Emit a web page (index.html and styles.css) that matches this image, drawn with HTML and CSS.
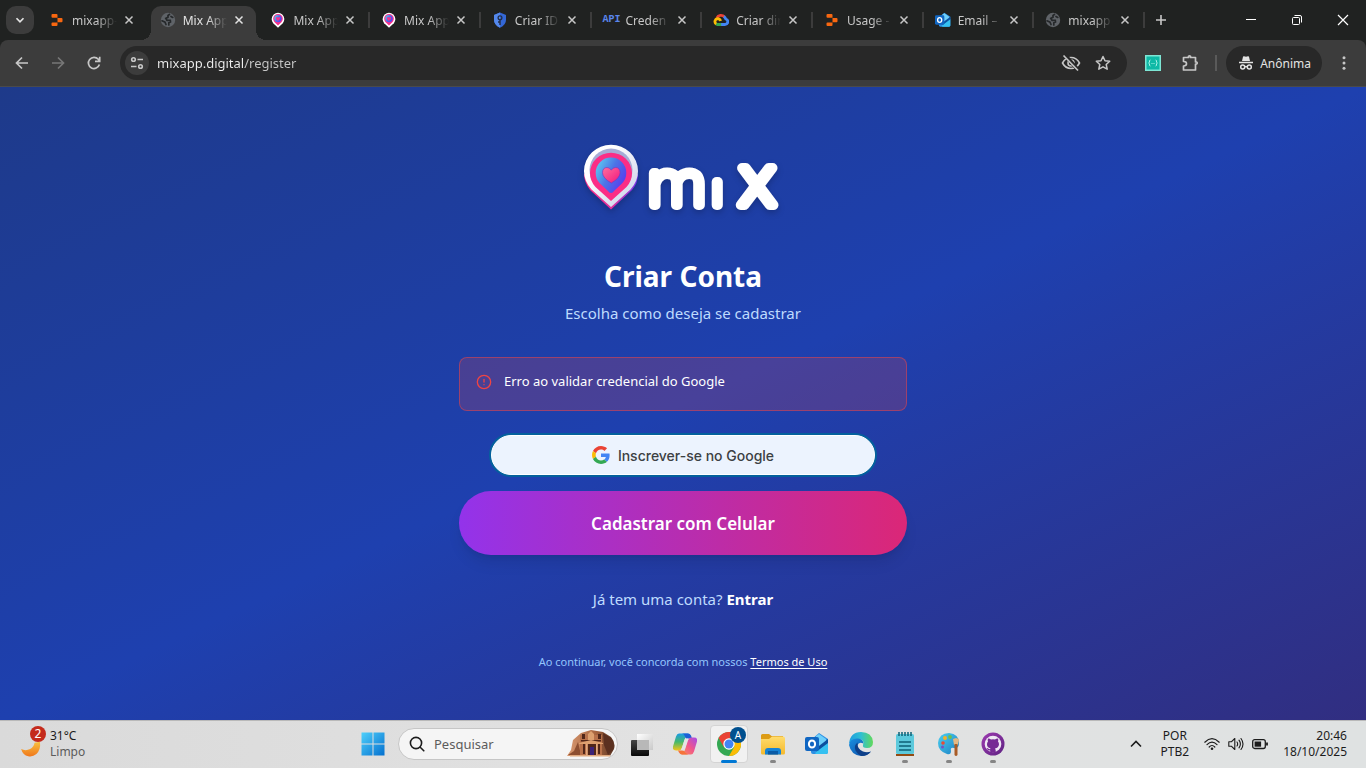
FILE: index.html
```html
<!DOCTYPE html>
<html lang="pt-BR">
<head>
<meta charset="utf-8">
<meta name="viewport" content="width=device-width, initial-scale=1">
<title>Mix App</title>
<link rel="stylesheet" href="styles.css">
</head>
<body>
<svg class="defs" aria-hidden="true">
  <defs>
    <linearGradient id="pinWhite" x1="0" y1="0" x2="1" y2="1"><stop offset=".3" stop-color="#fff"/><stop offset="1" stop-color="#c3cbe6"/></linearGradient>
    <linearGradient id="pinEdge" x1="0" y1="0" x2="1" y2="0"><stop offset="0" stop-color="#ff2d87"/><stop offset=".5" stop-color="#e0309c"/><stop offset="1" stop-color="#7a35f0"/></linearGradient>
    <linearGradient id="pinBlue" x1="0" y1=".1" x2="1" y2=".7"><stop offset="0" stop-color="#5fd0f2"/><stop offset=".5" stop-color="#4b74e6"/><stop offset="1" stop-color="#5a38f0"/></linearGradient>
    <linearGradient id="heart" x1="0" y1="0" x2="1" y2="1"><stop offset="0" stop-color="#ff6f9e"/><stop offset="1" stop-color="#f0167c"/></linearGradient>
    <linearGradient id="win" x1="0" y1="0" x2="1" y2="1"><stop offset="0" stop-color="#4fd0fb"/><stop offset="1" stop-color="#0470cf"/></linearGradient>
    <linearGradient id="moon" x1="0" y1="0" x2="0" y2="1"><stop offset="0" stop-color="#f8c140"/><stop offset="1" stop-color="#f0781c"/></linearGradient>
    <linearGradient id="cop1" x1="0" y1="0" x2="0" y2="1"><stop offset="0" stop-color="#1a9be8"/><stop offset=".5" stop-color="#46b96a"/><stop offset="1" stop-color="#f6c31a"/></linearGradient>
    <linearGradient id="cop2" x1="1" y1="0" x2="0" y2="1"><stop offset="0" stop-color="#a44bea"/><stop offset=".5" stop-color="#f0568c"/><stop offset="1" stop-color="#fb8f55"/></linearGradient>
    <linearGradient id="edgeA" x1="0" y1="0" x2="1" y2="0"><stop offset="0" stop-color="#1c9ce0"/><stop offset=".5" stop-color="#2fbfd2"/><stop offset="1" stop-color="#62d95a"/></linearGradient>
    <linearGradient id="edgeB" x1="0" y1="0" x2="1" y2="1"><stop offset="0" stop-color="#1a8fe0"/><stop offset="1" stop-color="#0c4ba4"/></linearGradient>
    <linearGradient id="folder" x1="0" y1="0" x2="0" y2="1"><stop offset="0" stop-color="#ffdc6e"/><stop offset="1" stop-color="#f5b92c"/></linearGradient>
    <linearGradient id="taskDark" x1="0" y1="0" x2="0" y2="1"><stop offset="0" stop-color="#454545"/><stop offset="1" stop-color="#080808"/></linearGradient>
    <linearGradient id="taskLight" x1="0" y1="0" x2="1" y2="1"><stop offset="0" stop-color="#fff"/><stop offset="1" stop-color="#c9c9c9"/></linearGradient>
    <linearGradient id="pal" x1="0" y1="0" x2="1" y2="1"><stop offset="0" stop-color="#4cd0f0"/><stop offset="1" stop-color="#1b7fc4"/></linearGradient>
    <linearGradient id="gh" x1="0" y1="0" x2="1" y2="1"><stop offset="0" stop-color="#9c3ab0"/><stop offset="1" stop-color="#5f2382"/></linearGradient>
    <linearGradient id="rock" x1="0" y1="0" x2="1" y2="0"><stop offset="0" stop-color="#d99a72"/><stop offset=".6" stop-color="#a8653f"/><stop offset="1" stop-color="#5d3826"/></linearGradient>
    <symbol id="replit" viewBox="0 0 16 16"><path fill="#f86710" d="M3.500 2h4q1 0 1 1v2.700h-5q-1 0-1-1V3q0-1 1-1zM8.500 6h4q1 0 1 1v2.200q0 1-1 1h-4zM3.500 10.400h5v2.700q0 1-1 1h-4q-1 0-1-1v-1.700q0-1 1-1z"/></symbol>
    <symbol id="globe" viewBox="0 0 16 16"><circle cx="8" cy="8" r="7.200" fill="#5f6368"/><path fill="none" stroke="#25282a" stroke-width="1.700" stroke-linecap="round" d="M9.500 2.300 8 3.500v1.700L5.800 6.400 7 8.300h3.300l.2 1.700-1.700.7v2.300M2 8.800l3 1.300 1 2.400M11 4.400l1.800 1"/></symbol>
    <symbol id="pin" viewBox="0 0 56 66"><path fill="#fff" d="M28 65 8 46A26 26 0 1 1 48 46z"/><path fill="#f72f8b" d="M28 56 13 41A20 20 0 1 1 43 41z"/><circle cx="28" cy="27" r="15" fill="url(#pinBlue)"/><path fill="#f72f8b" d="m28 37-8-8q-3-8 4-8l4 3 4-3q7 0 4 8z"/></symbol>
    <symbol id="shield" viewBox="0 0 16 16"><path fill="#3367d6" d="M8 .5 14 3v5q0 5-6 7.700Q2 13 2 8V3z"/><path fill="#5488ec" d="M8 .5 2 3v5q0 5 6 7.700z"/><circle cx="8" cy="5.700" r="1.900" fill="none" stroke="#222d46" stroke-width="1.300"/><path stroke="#222d46" stroke-width="1.400" d="M8 7.500V13M8 10h-2"/></symbol>
    <symbol id="cloud" viewBox="0 0 16 16"><path fill="none" stroke="#ea4335" stroke-width="2.800" d="M3.800 6A4.600 4.600 0 0 1 11.500 5"/><path fill="none" stroke="#4285f4" stroke-width="2.800" d="M10.800 4.500A5 5 0 0 1 12.800 7q2 .8 2 2.800 0 2.500-3 2.700H8"/><path fill="none" stroke="#34a853" stroke-width="2.800" d="M8.200 12.500H4.500L3 11.900"/><path fill="none" stroke="#fbbc04" stroke-width="2.800" d="M3.200 12A3 3 0 0 1 4.500 6.600Q7 6.500 7.500 9"/></symbol>
    <symbol id="outlook" viewBox="0 0 24 24"><path fill="#2c8fe4" d="M6 8 14 1l9 6v13q0 2-2 2H8q-2 0-2-2z"/><path fill="#6fd0fa" d="m11 4 3-2 7 5v8H10z"/><path fill="#0c4f9e" d="M23 7v5l-11 8-2-3z"/><path fill="#35c1f1" d="m23 11-12 9q-2 2 1 2h9q2 0 2-2z"/><rect x="0" y="5" width="14" height="14" rx="2" fill="#1066c2"/><ellipse cx="7" cy="12" rx="3.100" ry="3.600" fill="none" stroke="#fff" stroke-width="2"/></symbol>
    <symbol id="x" viewBox="0 0 16 16"><path stroke="currentColor" stroke-width="1.500" d="m4.500 4.500 7 7m0-7-7 7"/></symbol>
  </defs>
</svg>

<header class="browser">
  <div class="tabstrip">
    <button class="tab-search" aria-label="Pesquisar guias"><svg viewBox="0 0 16 16"><path fill="none" stroke="currentColor" stroke-width="2" d="m4 6 4 4 4-4"/></svg></button>
    <nav class="tabs" aria-label="Guias">
      <div class="tab tab-plain"><svg class="fav"><use href="#replit"/></svg><button class="title">mixapp-</button><button class="close" aria-label="Fechar"><svg><use href="#x"/></svg></button></div>
      <div class="tab tab-active"><svg class="fav"><use href="#globe"/></svg><button class="title">Mix App</button><button class="close" aria-label="Fechar"><svg><use href="#x"/></svg></button></div>
      <div class="tab"><svg class="fav"><use href="#pin"/></svg><button class="title">Mix App</button><button class="close" aria-label="Fechar"><svg><use href="#x"/></svg></button></div>
      <div class="tab"><svg class="fav"><use href="#pin"/></svg><button class="title">Mix App</button><button class="close" aria-label="Fechar"><svg><use href="#x"/></svg></button></div>
      <div class="tab"><svg class="fav"><use href="#shield"/></svg><button class="title">Criar ID</button><button class="close" aria-label="Fechar"><svg><use href="#x"/></svg></button></div>
      <div class="tab"><span class="fav fav-api">API</span><button class="title">Creden</button><button class="close" aria-label="Fechar"><svg><use href="#x"/></svg></button></div>
      <div class="tab"><svg class="fav"><use href="#cloud"/></svg><button class="title">Criar dir</button><button class="close" aria-label="Fechar"><svg><use href="#x"/></svg></button></div>
      <div class="tab"><svg class="fav"><use href="#replit"/></svg><button class="title">Usage -</button><button class="close" aria-label="Fechar"><svg><use href="#x"/></svg></button></div>
      <div class="tab"><svg class="fav"><use href="#outlook"/></svg><button class="title">Email –</button><button class="close" aria-label="Fechar"><svg><use href="#x"/></svg></button></div>
      <div class="tab"><svg class="fav"><use href="#globe"/></svg><button class="title">mixapp</button><button class="close" aria-label="Fechar"><svg><use href="#x"/></svg></button></div>
    </nav>
    <button class="new-tab" aria-label="Nova guia"><svg viewBox="0 0 16 16"><path stroke="currentColor" stroke-width="1.600" d="M8 3v10M3 8h10"/></svg></button>
    <div class="window-controls">
      <button aria-label="Minimizar"><svg viewBox="0 0 12 12"><path stroke="currentColor" d="M1 5.500h10"/></svg></button>
      <button aria-label="Restaurar"><svg viewBox="0 0 12 12"><rect x="1.500" y="3.500" width="7" height="7" rx="1" fill="none" stroke="currentColor"/><path fill="none" stroke="currentColor" d="M3.500 1.500h5.500q1.500 0 1.500 1.500v5.500"/></svg></button>
      <button aria-label="Fechar janela"><svg viewBox="0 0 12 12"><path stroke="currentColor" stroke-width="1.200" d="m1 1 10 10m0-10L1 11"/></svg></button>
    </div>
  </div>
  <div class="toolbar">
    <div class="nav-buttons">
      <button aria-label="Voltar"><svg viewBox="0 0 16 16"><path fill="none" stroke="currentColor" stroke-width="1.700" d="M14 8H3m5-5.500L2.500 8 8 13.500"/></svg></button>
      <button class="disabled" aria-label="Avançar"><svg viewBox="0 0 16 16"><path fill="none" stroke="currentColor" stroke-width="1.700" d="M2 8h11M8 2.500 13.500 8 8 13.500"/></svg></button>
      <button aria-label="Recarregar"><svg viewBox="0 0 16 16"><path fill="none" stroke="currentColor" stroke-width="1.700" d="M13.400 9.500A5.600 5.600 0 1 1 12.300 4.300L13.500 6M13.700 1.800v4.600H9"/></svg></button>
    </div>
    <form class="omnibox">
      <button type="button" class="site-info" aria-label="Informações do site"><svg viewBox="0 0 16 16"><g fill="none" stroke="currentColor" stroke-width="1.600"><circle cx="4.500" cy="4.500" r="1.800"/><path d="M8.500 4.500H14M2 11.500h5.500"/><circle cx="11.500" cy="11.500" r="1.800"/></g></svg></button>
      <input class="url" type="text" aria-label="Endereço" value="mixapp.digital/register">
      <button type="button" aria-label="Cookies bloqueados"><svg class="eye" viewBox="0 0 20 20"><g fill="none" stroke="currentColor" stroke-width="1.600"><path d="M1.500 10Q4.500 4.500 10 4.500T18.500 10Q15.500 15.500 10 15.500T1.500 10z"/><circle cx="10" cy="10" r="3"/></g><path stroke="#282828" stroke-width="4" d="m4 2 13 15"/><path stroke="currentColor" stroke-width="1.700" d="m2.500 2.500 14.500 15"/></svg></button>
      <button type="button" aria-label="Favoritar"><svg viewBox="0 0 16 16"><path fill="none" stroke="currentColor" stroke-width="1.500" stroke-linejoin="round" d="m8 1.500 2 4.300 4.700.5-3.500 3.200 1 4.700L8 11.800l-4.200 2.400 1-4.700L1.300 6.300 6 5.800z"/></svg></button>
    </form>
    <div class="toolbar-actions">
      <button aria-label="Extensão"><svg viewBox="0 0 16 16"><path fill="#7ee6d5" d="M0 0h16v16H0z"/><path fill="#0fb9a6" d="M1.500 1.500h13v13h-13z"/><path fill="none" stroke="#a8f3e8" d="M5.500 5Q4 5 4.500 7L3.700 8l.8 1Q4 11 5.500 11M10.500 5q1.500 0 1 2l.8 1-.8 1q.5 2-1 2M6.500 8.500h1m1 0h1"/></svg></button>
      <button aria-label="Extensões"><svg class="puzzle" viewBox="0 0 18 18"><path fill="none" stroke="currentColor" stroke-width="1.700" stroke-linejoin="round" d="M2.500 3.500h5V2.300q1-1 2 0v1.200h5V8h1.200q1 1 0 2h-1.200v6H2.500v-4q3 0 3-2.300t-3-2.200z"/></svg></button>
      <span class="divider"></span>
      <button class="profile"><svg viewBox="0 0 16 16"><path fill="currentColor" d="M4 6 5 1.800q.2-.8 1-.6l2 .5 2-.5q.8-.2 1 .6L12 6zM1 6.800h14v1.500H1z"/><g fill="none" stroke="currentColor" stroke-width="1.500"><circle cx="4.700" cy="12" r="2"/><circle cx="11.300" cy="12" r="2"/><path d="M6.700 11.800q1.300-.8 2.600 0"/></g></svg>Anônima</button>
      <button aria-label="Menu"><svg viewBox="0 0 16 16"><g fill="currentColor"><circle cx="8" cy="2.800" r="1.500"/><circle cx="8" cy="8" r="1.500"/><circle cx="8" cy="13.200" r="1.500"/></g></svg></button>
    </div>
  </div>
</header>

<main class="page">
  <section class="register">
    <svg class="logo" viewBox="0 0 200 80" role="img" aria-label="Mix">
      <path fill="url(#pinEdge)" d="M28 72.500 7 53Q1 45 1 37h54q0 9-6 16z"/>
      <path fill="url(#pinWhite)" d="M28 70 8.500 52.500A27 26.500 0 1 1 47.500 52.500z"/>
      <path fill="#a5acd6" d="M28 62.500 12.500 48A21.500 21.500 0 1 1 43.500 48z"/>
      <path fill="#fb2d86" d="M28 64 12.500 50A21 20.500 0 1 1 43.500 50z"/>
      <path fill="url(#pinBlue)" d="M28 56q-2 0-3-2l-8-7.500A15.300 15.300 0 1 1 39 46.500L31 54q-1 2-3 2z"/>
      <path fill="url(#heart)" stroke="#7a2fbd" stroke-width=".6" d="M28.300 46Q19.500 41 19.500 35.500q.3-5 4.500-5 2.800 0 4.300 2.700 1.500-2.700 4.300-2.700 4.200 0 4.500 5Q37.100 41 28.300 46z"/>
      <g class="wordmark"><text class="wm-m" x="66" y="68">m</text><text class="wm-i" x="130" y="68">ı</text><text class="wm-x" x="174" y="68" text-anchor="middle">x</text></g>
    </svg>
    <h1>Criar Conta</h1>
    <p class="subtitle">Escolha como deseja se cadastrar</p>
    <div class="alert" role="alert"><svg viewBox="0 0 24 24"><g fill="none" stroke="currentColor" stroke-width="2" stroke-linecap="round"><circle cx="12" cy="12" r="10"/><path d="M12 8v4M12 16h.01"/></g></svg><span>Erro ao validar credencial do Google</span></div>
    <button class="google"><svg viewBox="0 0 48 48"><path fill="#EA4335" d="M24 9.500c3.540 0 6.710 1.220 9.210 3.600l6.850-6.850C35.900 2.380 30.470 0 24 0 14.620 0 6.510 5.380 2.560 13.220l7.980 6.190C12.430 13.720 17.740 9.500 24 9.500z"/><path fill="#4285F4" d="M46.980 24.550c0-1.570-.15-3.090-.38-4.550H24v9.020h12.940c-.58 2.960-2.260 5.480-4.780 7.180l7.730 6c4.510-4.180 7.090-10.360 7.090-17.650z"/><path fill="#FBBC05" d="M10.530 28.590c-.48-1.450-.76-2.990-.76-4.590s.27-3.140.76-4.590l-7.980-6.190C.92 16.460 0 20.120 0 24c0 3.880.92 7.540 2.560 10.780l7.970-6.190z"/><path fill="#34A853" d="M24 48c6.480 0 11.930-2.130 15.890-5.810l-7.730-6c-2.150 1.450-4.920 2.300-8.160 2.300-6.260 0-11.570-4.220-13.470-9.910l-7.980 6.190C6.510 42.620 14.620 48 24 48z"/></svg>Inscrever-se no Google</button>
    <button class="phone">Cadastrar com Celular</button>
    <p class="login">Já tem uma conta? <a href="#entrar">Entrar</a></p>
    <p class="terms">Ao continuar, você concorda com nossos <a href="#termos">Termos de Uso</a></p>
  </section>
</main>

<footer class="taskbar">
  <button class="weather"><span class="weather-icon"><svg viewBox="0 0 24 20"><path fill="url(#moon)" d="M22 2Q23 11 18 15.500 14 19 9 18 3 17 1 10q5 2.500 10 0 4-2 5-7z"/></svg><span class="badge">2</span></span><span class="weather-text"><span>31°C</span><span class="muted">Limpo</span></span></button>
  <div class="dock">
    <button class="app" aria-label="Iniciar"><svg viewBox="0 0 24 24"><path fill="url(#win)" d="M.5.500h11v11H.5zM12.500.500h11v11h-11zM.5 12.500h11v11H.5zM12.500 12.500h11v11h-11z"/></svg></button>
    <label class="search"><svg class="lens" viewBox="0 0 16 16"><g fill="none" stroke="#1c1c1c" stroke-width="1.600" stroke-linecap="round"><circle cx="7" cy="7" r="5.600"/><path d="m11.200 11.200 3.600 3.600"/></g></svg><input type="search" placeholder="Pesquisar" aria-label="Pesquisar"><svg class="petra" viewBox="0 0 48 28"><path fill="url(#rock)" d="M0 26 4 20 6 10 14 3 24 0 36 2 44 7q5 6 3 12l-4 7z"/><path fill="#5b3020" d="m36 3 8 5q4 5 2 12l-5 5-4-10z"/><path fill="#8d4f31" d="m1 25 6-4 4-9 3 13z"/><path fill="#b8714a" d="M13 5h22v21H13z"/><path fill="#512719" d="M14 10h20v1.500H14zM15 4h3v5h-3zM31 4h3v5h-3zM16 13h2v11h-2zM21 14h8v11h-8zM31 13h2v11h-2z"/><path fill="#dda06f" d="m12 13 12-3 12 3v1H12zM21 4l3-3 3 3v6h-6z"/><path fill="#3c2378" d="M23 17h4v8h-4z"/><path fill="#e0a97e" d="M19 14h1.500v11H19zM29 14h1.500v11H29zM3 25h40v1.500H3z"/></svg></label>
    <button class="app" aria-label="Visão de tarefas"><svg viewBox="0 0 24 24"><rect x="2" y="8" width="18" height="16" rx="1" fill="url(#taskDark)"/><path fill="url(#taskLight)" d="M8 2h16v16H8z"/><path fill="#b8b8b8" d="M8 8h12v10H8z"/></svg></button>
    <button class="app" aria-label="Copilot"><svg viewBox="0 0 24 24"><path fill="url(#cop1)" d="M6 1.500h10q-3 1-4 5l-3 9q-1 3-3 3H3q-4 0-3-4l3-10q1-3 3-3z"/><path fill="#1c5fd8" d="M9 1.500h6q2 0 3 2l1 3h-4q-3 0-3-2-1-3-3-3z"/><path fill="url(#cop2)" d="M18 22.500H8q3-1 4-5l3-9q1-3 3-3h3q4 0 3 4l-3 10q-1 3-3 3z"/><path fill="#f5743b" d="M15 22.500H9q-2 0-3-2l-1-2h4q3 0 3 2z"/><path fill="#e5e4e3" d="m11.500 7.500 3.500-1-3 10-3.500 1z"/></svg></button>
    <button class="app app-active" aria-label="Google Chrome"><svg viewBox="0 0 24 24"><circle cx="12" cy="12" r="12" fill="#34a853"/><path fill="#ea4335" d="M1.600 6A12 12 0 0 1 22.400 6H12v6l-5.200 3z"/><path fill="#fbbc05" d="M22.400 6A12 12 0 0 1 12 24l5.200-9-1-9z"/><circle cx="12" cy="12" r="5.700" fill="#fff"/><circle cx="12" cy="12" r="4.500" fill="#4285f4"/></svg><span class="avatar">A</span></button>
    <button class="app app-running" aria-label="Explorador de Arquivos"><svg viewBox="0 0 24 24"><path fill="#dc9b15" d="M1.500 2H8l2.500 2H22v8H0V3.500Q0 2 1.500 2z"/><path fill="url(#folder)" d="M0 7h8l3-2.500h11q2 0 2 2V21q0 1.500-1.500 1.500h-21Q0 22.500 0 21z"/><path fill="#1682d4" d="M4 22.500V19q0-3 3-3h10q3 0 3 3v3.500z"/><path fill="#0a5ba6" d="M7 19h10v3.500H7z"/></svg></button>
    <button class="app" aria-label="Outlook"><svg><use href="#outlook"/></svg></button>
    <button class="app" aria-label="Edge"><svg viewBox="0 0 24 24"><path fill="url(#edgeA)" d="M0 12Q1 0 12 0q11 0 12 10 0 6-6 6-5 0-4-3 2-5-4-6-7 0-10 5z"/><path fill="url(#edgeB)" d="M0 13q1-7 9-6.500 5 .5 5.500 5-5-2-6 2-.5 5 5 7 5 1.500 8.500-1Q18 24 12 24 2 23 0 13z"/><path fill="#0d3f89" d="M8.500 10.500q-4 3-2 8 2 4 6 5.500 6 0 9.500-4.500-4 1.500-8 0-6-2.500-5.500-9z"/></svg></button>
    <button class="app app-running" aria-label="Bloco de Notas"><svg viewBox="0 0 24 24"><rect x="3" y="2" width="18" height="20" rx="1.500" fill="#5cc9dc"/><path fill="#934b13" d="M3 22h18v2H3z"/><path stroke="#0c6075" stroke-width="1.500" d="M6 0v4m3-4v4m3-4v4m3-4v4m3-4v4M6 10h12M6 14h12M6 18h12"/></svg></button>
    <button class="app app-running" aria-label="Paint"><svg viewBox="0 0 24 24"><path fill="url(#pal)" d="M12 1q10 1 10 10 0 6-5 5-4-1-3 3 0 4-4 3Q1 19 1 11 2 1 12 1z"/><circle cx="6" cy="11" r="1.800" fill="#e94b35"/><circle cx="8" cy="6" r="2" fill="#f6b32b"/><circle cx="13" cy="5" r="1.900" fill="#6fc04b"/><circle cx="5.500" cy="15" r="1.500" fill="#7551c4"/><path fill="#e4b883" d="m16 7 3-1 3 1-1 6h-4z"/><path fill="#a85b26" d="M17.500 12h3v11q-1.500 2-3 0z"/></svg></button>
    <button class="app app-running" aria-label="GitHub Desktop"><svg viewBox="0 0 24 24"><circle cx="12" cy="12" r="11.500" fill="url(#gh)"/><circle cx="12" cy="12" r="8.300" fill="#efe8f4"/><path fill="#762a94" d="M7 6.500q2 0 3 1 2-.5 4 0 1-1 3-1 .6 2 0 3 1 1 1 3-.5 3.500-4 4 1 1 .7 4h-5.400l-.1-2q-3 0-3.500-2.500 1.500 0 2 1l1.500.2.2-1q-3.400-.5-3.400-4 0-1.700 1-2.700-.6-1 0-3z"/></svg></button>
  </div>
  <div class="tray">
    <button class="tray-icon" aria-label="Ícones ocultos"><svg viewBox="0 0 16 16"><path fill="none" stroke="currentColor" stroke-width="1.600" d="m3 10.500 5-5 5 5"/></svg></button>
    <button class="lang"><span>POR</span><span>PTB2</span></button>
    <button class="status" aria-label="Rede, som e bateria">
      <svg viewBox="0 0 16 16"><g fill="none" stroke="currentColor" stroke-width="1.200" stroke-linecap="round"><path d="M.8 6.200q7.200-7 14.400 0M3 8.600q5-5 10 0M5.200 11q2.800-3 5.600 0"/></g><circle cx="8" cy="12.800" r="1.300" fill="currentColor"/></svg>
      <svg viewBox="0 0 16 16"><g fill="none" stroke="currentColor" stroke-width="1.100" stroke-linecap="round" stroke-linejoin="round"><path d="M.8 5.800h2.500L6.800 2.500v11L3.300 10.200H.8zM9 6q1.300 2 0 4M11 4.200q2.800 3.800 0 7.600M13 2.500q4 5.500 0 11"/></g></svg>
      <svg viewBox="0 0 16 16"><rect x=".7" y="3.700" width="12.600" height="8.800" rx="2" fill="none" stroke="currentColor" stroke-width="1.300"/><rect x="2.600" y="5.500" width="6.500" height="5.200" fill="currentColor"/><path stroke="currentColor" stroke-width="1.800" d="M15 6.500v3"/></svg>
    </button>
    <button class="clock"><span>20:46</span><span>18/10/2025</span></button>
  </div>
</footer>
</body>
</html>
```
FILE: styles.css
```css
* { box-sizing: border-box; }
body {
  margin: 0;
  min-height: 100vh;
  display: flex;
  flex-direction: column;
  font-family: "Noto Sans", "Open Sans", sans-serif;
  font-size: 12px;
}
button, input {
  font: inherit;
  color: inherit;
  background: none;
  border: 0;
  padding: 0;
  margin: 0;
  min-width: 0;
}
svg { display: block; flex: none; }
.defs { position: absolute; width: 0; height: 0; }

/* Browser chrome */
.browser { background: #202221; color: #c7c7c7; }
.tabstrip { display: flex; align-items: center; height: 40px; }
.tab-search {
  flex: none;
  display: grid;
  place-items: center;
  width: 28px;
  height: 28px;
  margin: 0 4px 0 6px;
  border-radius: 10px;
  background: #3c3c3c;
  color: #e3e3e3;
}
.tab-search svg { width: 14px; height: 14px; }
.tabs { flex: 0 1 1107px; display: flex; min-width: 0; }
.tab {
  position: relative;
  flex: 1 1 0;
  min-width: 0;
  display: flex;
  align-items: center;
  height: 40px;
  padding: 0 12px 0 11px;
}
.tab::after {
  content: "";
  position: absolute;
  right: 0;
  top: 12px;
  width: 2px;
  height: 16px;
  background: #3c3c3c;
}
.tab-plain::after { display: none; }
.fav { flex: none; width: 16px; height: 16px; margin-right: 7px; }
.fav-api { font: 700 10px/16px "Liberation Mono", monospace; color: #5a86ec; }
.title {
  flex: 1;
  overflow: hidden;
  white-space: nowrap;
  text-align: left;
  -webkit-mask-image: linear-gradient(90deg, #000 55%, transparent);
  mask-image: linear-gradient(90deg, #000 55%, transparent);
}
.close { flex: none; margin-left: 4px; }
.close svg { width: 16px; height: 16px; }
.tab-active {
  margin: 6px 3px 0 2px;
  padding: 0 9px 6px 9px;
  height: 34px;
  border-radius: 10px 10px 0 0;
  background: #3c3c3c;
  color: #e3e3e3;
}
.tab-active::before, .tab-active::after {
  content: "";
  position: absolute;
  top: auto;
  bottom: 0;
  width: 10px;
  height: 10px;
}
.tab-active::before { left: -10px; background: radial-gradient(circle at 0 0, transparent 10px, #3c3c3c 10px); }
.tab-active::after { right: -10px; background: radial-gradient(circle at 100% 0, transparent 10px, #3c3c3c 10px); }
.new-tab { margin-left: 8px; }
.new-tab svg { width: 16px; height: 16px; }
.window-controls { display: flex; margin-left: auto; color: #fff; }
.window-controls button { display: grid; place-items: center; width: 46px; height: 40px; }
.window-controls svg { width: 12px; height: 12px; }
.toolbar {
  display: flex;
  align-items: center;
  height: 47px;
  padding: 0 14px 0 8px;
  border-bottom: 1px solid #4a4a4a;
  border-radius: 8px 8px 0 0;
  background: #3c3c3c;
}
.toolbar button { flex: none; }
.toolbar svg { width: 16px; height: 16px; }
.nav-buttons { display: flex; }
.nav-buttons button { display: grid; place-items: center; width: 28px; height: 28px; margin-right: 8px; }
.nav-buttons .disabled { color: #777; }
.omnibox {
  flex: 1;
  min-width: 0;
  display: flex;
  align-items: center;
  gap: 16px;
  height: 34px;
  margin-left: 4px;
  padding: 0 16px 0 5px;
  border-radius: 17px;
  background: #282828;
}
.site-info { display: grid; place-items: center; width: 24px; height: 24px; border-radius: 12px; background: #3c3c3c; margin-right: -8px; }
.url {
  flex: 1;
  font-size: 13px;
  color: transparent;
  background: linear-gradient(90deg, #eee 88px, #c7c7c7 88px);
  -webkit-background-clip: text;
  background-clip: text;
  outline: 0;
}
.toolbar .eye { width: 20px; height: 20px; }
.omnibox button:nth-of-type(2) { margin-right: -2px; }
.toolbar-actions { display: flex; align-items: center; margin-left: 18px; }
.toolbar .puzzle { width: 18px; height: 18px; margin-left: 20px; }
.divider { width: 2px; height: 16px; margin: 0 9px 0 16px; background: #5a5a5a; }
.profile {
  display: flex;
  align-items: center;
  gap: 6px;
  height: 34px;
  margin-right: 14px;
  padding: 0 11px 0 12px;
  border-radius: 17px;
  background: #282828;
  color: #e3e3e3;
}

/* Registration page */
.page {
  flex: 1;
  display: flex;
  align-items: center;
  justify-content: center;
  padding: 48px 16px;
  background: linear-gradient(to bottom right, #1e3a8a, #1e40af, #312e81);
  color: #fff;
}
.register {
  display: flex;
  flex-direction: column;
  align-items: center;
  width: 100%;
  max-width: 448px;
  text-align: center;
}
.register p { margin: 0; }
.logo { width: 200px; height: 80px; margin-bottom: 41px; overflow: visible; filter: drop-shadow(0 3px 3px rgba(0, 0, 0, .2)); }
.wordmark { fill: #fff; stroke: #fff; stroke-width: 10px; stroke-linejoin: round; stroke-linecap: round; }
.wm-m { font: 100 62px Roboto, sans-serif; }
.wm-i { font: 100 42px Roboto, sans-serif; }
.wm-x { font: 200 68px "DejaVu Sans", sans-serif; }
h1 { margin: 0 0 7px; font-size: 28px; line-height: 36px; font-weight: 700; }
.subtitle { font-size: 15px; line-height: 24px; color: #bfdbfe; }
.alert {
  display: flex;
  align-items: flex-start;
  gap: 12px;
  width: 100%;
  margin-top: 32px;
  padding: 13px 16px 19px;
  border: 1px solid rgba(239, 68, 68, .5);
  border-radius: 8px;
  background: rgba(239, 68, 68, .2);
  font-size: 13px;
  line-height: 20px;
}
.alert svg { width: 16px; height: 16px; margin-top: 3px; color: #ef4444; }
.google {
  display: flex;
  align-items: center;
  justify-content: center;
  gap: 8px;
  width: 384px;
  max-width: 100%;
  height: 40px;
  margin-top: 24px;
  border: 1px solid #fff;
  border-radius: 20px;
  background: #ecf3fe;
  box-shadow: 0 0 0 2px #04609d;
  color: #3c4043;
  font: 500 14px Inter, sans-serif;
}
.google svg { width: 18px; height: 18px; }
.phone {
  width: 100%;
  height: 64px;
  margin-top: 16px;
  border-radius: 32px;
  background: linear-gradient(90deg, #9333ea, #db2777);
  box-shadow: 0 10px 15px -3px rgba(0, 0, 0, .1), 0 4px 6px -4px rgba(0, 0, 0, .1);
  font-size: 17px;
  font-weight: 600;
}
.login { padding-top: 32px; font-size: 15px; line-height: 24px; color: #bfdbfe; }
.login a { color: #fff; font-weight: 700; text-decoration: none; }
.terms { padding-top: 43px; font-size: 11px; line-height: 16px; color: #93c5fd; }
.terms a { color: #fff; text-underline-offset: 2px; }

/* Desktop taskbar */
.taskbar {
  display: grid;
  grid-template-columns: 1fr auto 1fr;
  align-items: center;
  height: 48px;
  box-shadow: inset 0 1px #b9b9b9;
  background: linear-gradient(90deg, #dadada, #e2e2e2 50%, #dfe2e2);
  color: #1c1c1c;
  line-height: 16px;
}
.weather { display: flex; align-items: center; justify-self: start; gap: 6px; padding-left: 20px; }
.weather-icon { position: relative; width: 24px; height: 36px; padding-top: 14px; }
.weather-icon svg { width: 22px; height: 18px; }
.badge {
  position: absolute;
  top: 0;
  right: -2px;
  width: 16px;
  height: 16px;
  border-radius: 8px;
  background: #c42b1c;
  color: #fff;
}
.weather-text, .lang, .clock { display: flex; flex-direction: column; }
.weather-text { text-align: left; }
.muted { color: #5c5c5c; }
.dock { display: flex; align-items: center; }
.app { position: relative; display: grid; place-items: center; width: 44px; height: 40px; }
.app svg { width: 24px; height: 24px; }
.search {
  display: flex;
  align-items: center;
  width: 220px;
  height: 32px;
  margin: 0 1px 0 3px;
  padding: 0 2px 0 10px;
  border: 1px solid #c6c6c6;
  border-radius: 16px;
  background: #f5f5f5;
}
.lens { width: 16px; height: 16px; margin-right: 9px; }
.search input { flex: 1; width: 0; font-size: 13px; outline: 0; }
.search input::placeholder { color: #5c5c5c; opacity: 1; }
.petra { width: 48px; height: 28px; }
.app-active::before {
  content: "";
  position: absolute;
  inset: 1px 3px;
  border: 1px solid #d4d4d4;
  border-radius: 4px;
  background: #f1f1f1;
}
.app-active svg { position: relative; }
.avatar {
  position: absolute;
  top: 3px;
  right: 5px;
  width: 16px;
  height: 16px;
  border-radius: 8px;
  background: #00508f;
  color: #fff;
  font-size: 10px;
}
.app-active::after, .app-running::after {
  content: "";
  position: absolute;
  bottom: 1px;
  left: 50%;
  width: 6px;
  height: 3px;
  border-radius: 2px;
  background: #858585;
  transform: translateX(-50%);
}
.app-active::after { width: 16px; background: #0078d4; }
.tray { display: flex; align-items: center; justify-content: flex-end; padding-right: 19px; }
.tray-icon svg, .status svg { width: 16px; height: 16px; }
.lang { align-items: center; margin: 0 15px 0 17px; }
.status { display: flex; gap: 8px; margin-right: 15px; }
.clock { text-align: right; }
```
